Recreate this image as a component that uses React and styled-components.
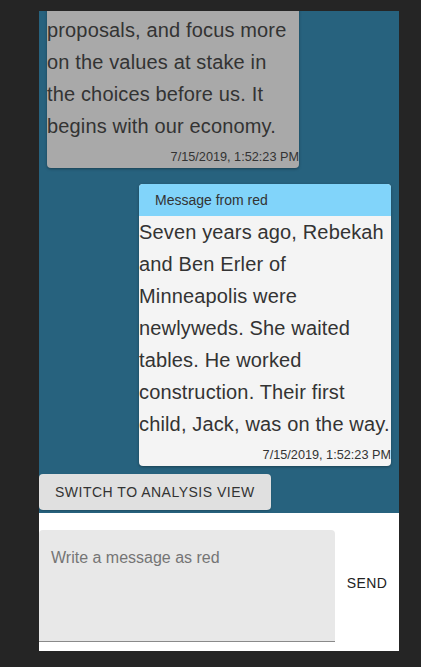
import React from "react";
import styled, { createGlobalStyle } from "styled-components";

const GlobalStyle = createGlobalStyle`
  html, body {
    margin: 0;
    background: #252525;
    font-family: "Liberation Sans", Arial, sans-serif;
  }
`;

const messages = [
  {
    id: 1,
    author: "blue",
    mine: false,
    text:
      "Tonight, I want to focus less on a checklist of\nproposals, and focus more on the values at stake in the choices before us. It begins with our economy.",
    time: "7/15/2019, 1:52:23 PM",
  },
  {
    id: 2,
    author: "red",
    mine: true,
    text:
      "Seven years ago, Rebekah and Ben Erler of Minneapolis were newlyweds. She waited tables. He worked construction. Their first child, Jack, was on the way.",
    time: "7/15/2019, 1:52:23 PM",
  },
];

const App = () => {
  return (
    <>
      <GlobalStyle />
      <Frame>
        <ChatPanel>
          <MessageList>
            {messages.map((m) => (
              <Bubble key={m.id} $mine={m.mine}>
                <BubbleHeader $mine={m.mine}>Message from {m.author}</BubbleHeader>
                <BubbleText>{m.text}</BubbleText>
                <Stamp>{m.time}</Stamp>
              </Bubble>
            ))}
          </MessageList>
          <SwitchButton>Switch to analysis view</SwitchButton>
        </ChatPanel>
        <Composer>
          <MessageInput placeholder="Write a message as red" />
          <SendButton>Send</SendButton>
        </Composer>
      </Frame>
    </>
  );
};

export default App;

const Frame = styled.div`
  width: 360px;
  margin: 11px 0 0 39px;
`;

const ChatPanel = styled.div`
  height: 502px;
  background: #27627e;
  display: flex;
  flex-direction: column;
  padding-bottom: 3px;
  box-sizing: border-box;
`;

const MessageList = styled.div`
  flex: 1;
  min-height: 0;
  overflow: hidden;
  display: flex;
  flex-direction: column;
  justify-content: flex-end;
  gap: 16px;
  padding: 0 8px 8px;
`;

const Bubble = styled.div`
  flex-shrink: 0;
  width: 252px;
  align-self: ${(p) => (p.$mine ? "flex-end" : "flex-start")};
  background: ${(p) => (p.$mine ? "#f4f4f4" : "#a9a9a9")};
  border-radius: 4px;
  overflow: hidden;
  box-shadow: 0 1px 3px rgba(0, 0, 0, 0.35);
  color: #333;
`;

const BubbleHeader = styled.div`
  height: 32px;
  line-height: 32px;
  padding-left: 16px;
  font-size: 14px;
  color: #333;
  background: ${(p) => (p.$mine ? "#81d4fa" : "#9a9a9a")};
`;

const BubbleText = styled.div`
  font-size: 20px;
  line-height: 32px;
  letter-spacing: 0.15px;
  white-space: pre-line;
`;

const Stamp = styled.div`
  margin-top: 6px;
  padding-bottom: 2px;
  font-size: 12.7px;
  line-height: 18px;
  text-align: right;
  color: #333;
`;

const SwitchButton = styled.button`
  flex-shrink: 0;
  align-self: flex-start;
  height: 36px;
  padding: 0 16px;
  border: none;
  border-radius: 4px;
  background: #e0e0e0;
  color: #333;
  font-family: "Liberation Sans", Arial, sans-serif;
  font-size: 14px;
  letter-spacing: 0.5px;
  text-transform: uppercase;
  box-shadow: 0 1px 2px rgba(0, 0, 0, 0.2);
`;

const Composer = styled.div`
  height: 138px;
  background: #fff;
  display: flex;
  align-items: center;
  padding: 17px 0 9px;
  box-sizing: border-box;
`;

const MessageInput = styled.textarea`
  width: 296px;
  height: 112px;
  box-sizing: border-box;
  resize: none;
  border: none;
  border-bottom: 1px solid #8a8a8a;
  border-radius: 4px 4px 0 0;
  background: #e8e8e8;
  padding: 19px 12px;
  font-family: "Liberation Sans", Arial, sans-serif;
  font-size: 16px;
  color: #333;
  outline: none;

  &::placeholder {
    color: #757575;
  }
`;

const SendButton = styled.button`
  flex: 1;
  border: none;
  background: none;
  color: #222;
  font-family: "Liberation Sans", Arial, sans-serif;
  font-size: 14px;
  letter-spacing: 0.4px;
  text-transform: uppercase;
  padding: 0;
  margin-top: -6px;
`;
